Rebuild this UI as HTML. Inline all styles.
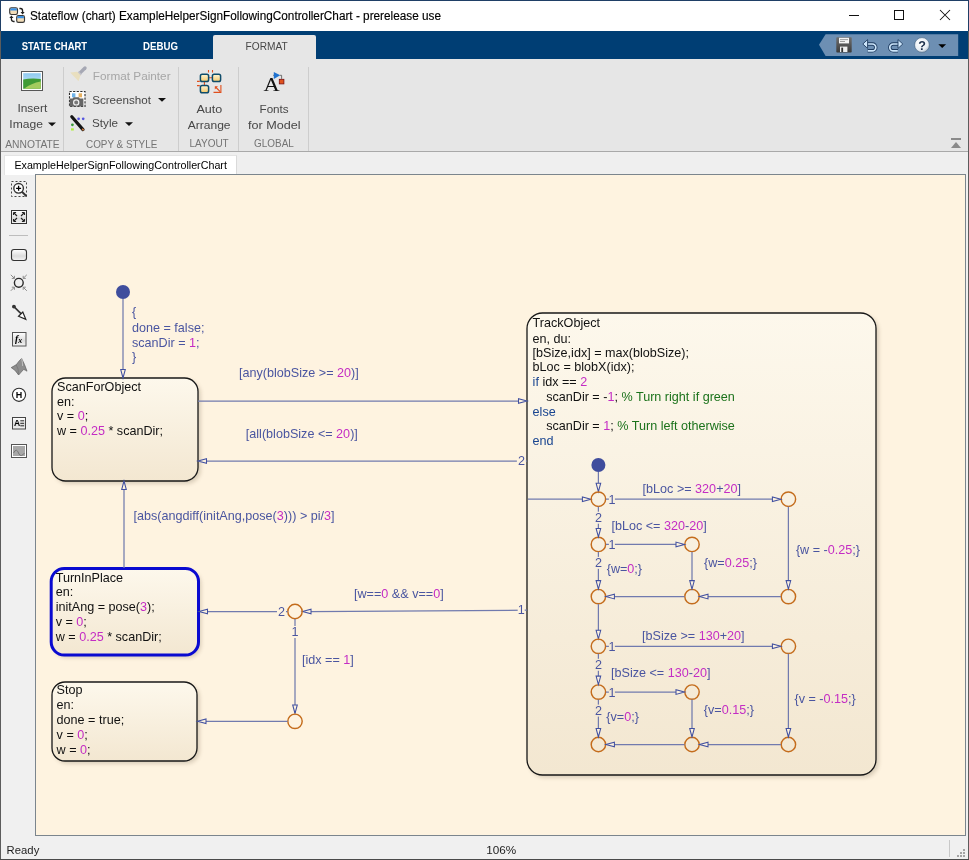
<!DOCTYPE html>
<html><head><meta charset="utf-8">
<style>
*{margin:0;padding:0;box-sizing:border-box}
html,body{width:969px;height:860px;overflow:hidden;background:#f0f0f0;font-family:"Liberation Sans",sans-serif}
.a{position:absolute;white-space:nowrap}
svg text{font-family:"Liberation Sans",sans-serif}
svg{will-change:transform}
</style></head><body>
<!-- backgrounds -->
<div class="a" style="left:0;top:0;width:969px;height:31px;background:#fff"></div>
<div class="a" style="left:0;top:0;width:969px;height:1px;background:#1f3f66"></div>
<div class="a" style="left:1px;top:31px;width:967px;height:28px;background:#003e74"></div>
<div class="a" style="left:1px;top:59px;width:967px;height:92px;background:#e6e6e6"></div>
<div class="a" style="left:1px;top:151px;width:967px;height:1px;background:#a9a9a9"></div>
<div class="a" style="left:1px;top:152px;width:967px;height:22px;background:#efefef"></div>
<div class="a" style="left:1px;top:174px;width:34px;height:662px;background:#f0f0f0"></div>
<div class="a" style="left:1px;top:836px;width:967px;height:23px;background:#f0f0f0"></div>
<div class="a" style="left:0;top:0;width:1px;height:860px;background:#5c5c5c"></div>
<div class="a" style="left:968px;top:0;width:1px;height:860px;background:#5c5c5c"></div>
<div class="a" style="left:0;top:859px;width:969px;height:1px;background:#4a4a4a"></div>
<div class="a" style="left:0;top:0;width:1px;height:31px;background:#1f3f66"></div>
<div class="a" style="left:968px;top:0;width:1px;height:31px;background:#1f3f66"></div>
<!-- doc tab -->
<div class="a" style="left:4px;top:155px;width:233px;height:20px;background:#fff;border-right:1px solid #dadada;border-top:1px solid #e4e4e4;border-left:1px solid #e4e4e4"></div>
<!-- canvas -->
<div class="a" style="left:35px;top:174px;width:931px;height:662px;background:#fef3e0;border:1px solid #7b858d"></div>

<svg class="a" style="left:0;top:0" width="969" height="860" viewBox="0 0 969 860">
<defs>
<linearGradient id="qsave" x1="0" y1="0" x2="0" y2="1"><stop offset="0" stop-color="#707070"/><stop offset="1" stop-color="#3a3a3a"/></linearGradient>
<linearGradient id="cream" x1="0" y1="0" x2="0" y2="1"><stop offset="0" stop-color="#fff6d8"/><stop offset="1" stop-color="#f4c868"/></linearGradient>
<linearGradient id="ibox" x1="0" y1="0" x2="0" y2="1"><stop offset="0" stop-color="#ffffff"/><stop offset="0.6" stop-color="#dcdcdc"/><stop offset="1" stop-color="#f4f4f4"/></linearGradient>
<radialGradient id="help" cx="0.4" cy="0.35" r="0.7"><stop offset="0" stop-color="#ffffff"/><stop offset="0.7" stop-color="#e8eef4"/><stop offset="1" stop-color="#aab8c8"/></radialGradient>
</defs>

<!-- title icon -->
<g>
<rect x="9.7" y="7.7" width="7.8" height="6.8" rx="1.7" fill="#f2ddb8" stroke="#3a3a3a" stroke-width="1.15"/>
<path d="M10.3 10.4 V9.4 a1.2 1.2 0 0 1 1.2-1.2 h4.2 a1.2 1.2 0 0 1 1.2 1.2 v1z" fill="#3a90e4"/>
<rect x="16.7" y="15.6" width="7.8" height="6.8" rx="1.7" fill="#f2ddb8" stroke="#3a3a3a" stroke-width="1.15"/>
<path d="M17.3 18.3 V17.3 a1.2 1.2 0 0 1 1.2-1.2 h4.2 a1.2 1.2 0 0 1 1.2 1.2 v1z" fill="#3a90e4"/>
<path d="M19.4 8.5 h1.2 q2 0 2 2.4 v1.4" fill="none" stroke="#222" stroke-width="1.3"/>
<path d="M20.5 12.1 h4.2 l-2.1 2.5z" fill="#222"/>
<path d="M14.6 21.5 h-1.2 q-2 0 -2 -2.4 v-1.4" fill="none" stroke="#222" stroke-width="1.3"/>
<path d="M9.3 17.9 h4.2 l-2.1 -2.5z" fill="#222"/>
</g>
<text x="30" y="20" font-size="12" fill="#000" stroke="#000" stroke-width="0.15" textLength="411" lengthAdjust="spacingAndGlyphs">Stateflow (chart) ExampleHelperSignFollowingControllerChart - prerelease use</text>
<!-- window controls -->
<rect x="849" y="15" width="10" height="1" fill="#111"/>
<rect x="894.5" y="10.5" width="9" height="9" fill="none" stroke="#111" stroke-width="1"/>
<path d="M940 10 L950 20 M950 10 L940 20" stroke="#111" stroke-width="1.05"/>

<!-- tabs -->
<text x="21.7" y="49.8" font-size="10.4" font-weight="bold" fill="#fff" textLength="65.4" lengthAdjust="spacingAndGlyphs">STATE CHART</text>
<text x="143" y="49.8" font-size="10.4" font-weight="bold" fill="#fff" textLength="34.9" lengthAdjust="spacingAndGlyphs">DEBUG</text>
<path d="M213 59 V37 a2 2 0 0 1 2-2 H314 a2 2 0 0 1 2 2 V59z" fill="#e6e6e6"/>
<text x="245.6" y="49.9" font-size="10.6" fill="#474747" textLength="42" lengthAdjust="spacingAndGlyphs">FORMAT</text>

<!-- QAT -->
<path d="M819 44.8 L825.6 34.2 H958.2 V55.9 H825.6 Z" fill="#6d8fb3"/>
<g>
<rect x="836.3" y="37.2" width="15.4" height="15.4" rx="0.8" fill="url(#qsave)"/>
<rect x="839" y="37.8" width="10" height="5.6" fill="#f4f4f4"/>
<rect x="840" y="39.3" width="8" height="0.8" fill="#888"/>
<rect x="840" y="41.2" width="5" height="0.8" fill="#888"/>
<rect x="840" y="46.6" width="7.4" height="5.4" fill="#eeeeee"/>
<rect x="841.3" y="47.6" width="1.8" height="4.4" fill="#333"/>
</g>
<g fill="none" stroke-linecap="butt">
<path d="M866.2 44 H872.4 a3.4 3.4 0 0 1 0 6.8 H867.6" stroke="#1f3c60" stroke-width="3.4"/>
<path d="M866.2 44 H872.4 a3.4 3.4 0 0 1 0 6.8 H867.8" stroke="#cde6fb" stroke-width="1.7"/>
<path d="M899.4 44 H893.2 a3.4 3.4 0 0 0 0 6.8 H898" stroke="#1f3c60" stroke-width="3.4"/>
<path d="M899.4 44 H893.2 a3.4 3.4 0 0 0 0 6.8 H897.8" stroke="#cde6fb" stroke-width="1.7"/>
</g>
<path d="M862.8 44 L867.6 39.6 V48.4 Z" fill="#cde6fb" stroke="#1f3c60" stroke-width="0.9" stroke-linejoin="round"/>
<path d="M902.8 44 L898 39.6 V48.4 Z" fill="#cde6fb" stroke="#1f3c60" stroke-width="0.9" stroke-linejoin="round"/>
<circle cx="922" cy="45" r="7.4" fill="url(#help)" stroke="#3a5a7a" stroke-width="0.6"/>
<text x="922" y="49.6" font-size="12.5" font-weight="bold" text-anchor="middle" fill="#1a2e4a">?</text>
<path d="M938.3 44.2 h7.8 l-3.9 3.8z" fill="#000"/>

<!-- Ribbon: ANNOTATE -->
<rect x="21.5" y="71.5" width="21" height="19" fill="#fff" stroke="#575757" stroke-width="1"/>
<linearGradient id="sky" x1="0" y1="0" x2="0" y2="1"><stop offset="0" stop-color="#8fcaf0"/><stop offset="1" stop-color="#d4eefb"/></linearGradient><rect x="23.2" y="73.2" width="17.6" height="15.6" fill="url(#sky)"/>
<path d="M23.2 79.5 q8 -1.5 17.6 -0.5 v9.8 h-17.6z" fill="#3f9b35"/>
<path d="M24 88.8 q7 -5.5 16.8 -7.2 v7.2z" fill="#a3cc5e"/>
<text x="17.4" y="111.8" font-size="11.2" fill="#474747" textLength="29.9" lengthAdjust="spacingAndGlyphs">Insert</text>
<text x="9.3" y="127.9" font-size="11.2" fill="#474747" textLength="33.6" lengthAdjust="spacingAndGlyphs">Image</text>
<path d="M48 122.5 h8 l-4 3.8z" fill="#111"/>
<text x="5.2" y="147.5" font-size="10.3" fill="#747474" textLength="54.5" lengthAdjust="spacingAndGlyphs">ANNOTATE</text>
<rect x="63" y="67" width="1" height="84" fill="#cdcdcd"/>

<!-- COPY & STYLE -->
<path d="M85 68 L79.6 73.4" stroke="#a6a8b4" stroke-width="3.4" stroke-linecap="round"/><path d="M80.2 72.8 L78 75" stroke="#c4c4cc" stroke-width="4.2"/>
<path d="M70.2 72.5 L77.2 71.8 L80.6 75.2 L78.5 81.2 Z" fill="#e9dfbf"/>
<text x="92.8" y="80" font-size="11.2" fill="#a6a6a6" textLength="77.8" lengthAdjust="spacingAndGlyphs">Format Painter</text>
<rect x="69.5" y="91.5" width="15.5" height="15" fill="#fff" stroke="#2a2a2a" stroke-width="1.1" stroke-dasharray="2.2,1.4"/>
<rect x="72" y="93.3" width="3.4" height="4" fill="#6fb4ea"/>
<rect x="78.6" y="93.3" width="3.4" height="4" fill="#e6b060"/>
<path d="M69.6 98.4 h3 l1 -1.2 h5.2 l1 1.2 h3.6 v8 h-13.8z" fill="#666"/>
<circle cx="76.2" cy="102.4" r="2.6" fill="#777" stroke="#eeeeee" stroke-width="1.2"/>
<text x="92.2" y="103.8" font-size="11.2" fill="#474747" textLength="58.8" lengthAdjust="spacingAndGlyphs">Screenshot</text>
<path d="M158 98 h8 l-4 3.8z" fill="#111"/>
<path d="M71.8 116.8 L83 129.6" stroke="#151515" stroke-width="3.2" stroke-linecap="round"/>
<path d="M82.2 128.8 L83.6 130.4" stroke="#d07a3a" stroke-width="1.6"/>
<circle cx="78.6" cy="118.8" r="1.35" fill="#5555e0"/>
<circle cx="83.2" cy="118.8" r="1.35" fill="#5555e0"/>
<circle cx="72.4" cy="124.8" r="1.4" fill="#3a9a3a"/>
<rect x="71" y="128.3" width="2.8" height="2.2" fill="#b0f040"/>
<text x="92" y="127.3" font-size="11.2" fill="#474747" textLength="26" lengthAdjust="spacingAndGlyphs">Style</text>
<path d="M125 122.2 h8 l-4 3.8z" fill="#111"/>
<text x="86" y="147.8" font-size="10.3" fill="#747474" textLength="71.3" lengthAdjust="spacingAndGlyphs">COPY &amp; STYLE</text>
<rect x="178" y="67" width="1" height="84" fill="#cdcdcd"/>

<!-- LAYOUT -->
<g stroke="#e0501e" stroke-width="1.1" fill="none">
<path d="M208.5 70 v2.6 M212.5 70 v2.6 M197 81.4 h2.8 M197 85.6 h2.8 M208.8 77.8 h3.2 M204.4 82 v3"/>
<path d="M213.5 92.4 h7.4 v-7.4"/>
<path d="M220.2 91.7 L215.5 87"/>
</g>
<path d="M214.8 86.3 h3.2 l-3.2 3.2z" fill="#e0501e"/>
<rect x="200.4" y="74.2" width="8.2" height="7.4" rx="1.8" fill="url(#cream)" stroke="#0f4c6a" stroke-width="1.5"/>
<rect x="212.4" y="74.2" width="8.2" height="7.4" rx="1.8" fill="url(#cream)" stroke="#0f4c6a" stroke-width="1.5"/>
<rect x="200.4" y="85.4" width="8.2" height="7.4" rx="1.8" fill="url(#cream)" stroke="#0f4c6a" stroke-width="1.5"/>
<text x="196.4" y="113.2" font-size="11.2" fill="#474747" textLength="25.8" lengthAdjust="spacingAndGlyphs">Auto</text>
<text x="187.7" y="129" font-size="11.2" fill="#474747" textLength="42.9" lengthAdjust="spacingAndGlyphs">Arrange</text>
<text x="189.5" y="147.3" font-size="10.3" fill="#747474" textLength="39.2" lengthAdjust="spacingAndGlyphs">LAYOUT</text>
<rect x="238" y="67" width="1" height="84" fill="#cdcdcd"/>

<!-- GLOBAL -->
<text x="263.4" y="90.8" style="font-family:'Liberation Serif'" font-size="19.5" fill="#111" textLength="16.2" lengthAdjust="spacingAndGlyphs">A</text>
<path d="M273.2 75.3 h1" stroke="#444" stroke-width="0.8"/>
<path d="M273.8 71.9 L280.2 75.3 L273.8 78.9z" fill="#1f72d0"/>
<path d="M280 75.3 h1.6 v3.6" fill="none" stroke="#555" stroke-width="0.8"/>
<rect x="279.3" y="79.3" width="4.6" height="4.6" fill="#e0521e" stroke="#7a1010" stroke-width="0.8"/>
<text x="259.5" y="113.2" font-size="11.2" fill="#474747" textLength="29.2" lengthAdjust="spacingAndGlyphs">Fonts</text>
<text x="248" y="129" font-size="11.2" fill="#474747" textLength="52.6" lengthAdjust="spacingAndGlyphs">for Model</text>
<text x="254" y="147.3" font-size="10.3" fill="#747474" textLength="39.8" lengthAdjust="spacingAndGlyphs">GLOBAL</text>
<rect x="308" y="67" width="1" height="84" fill="#cdcdcd"/>

<!-- collapse ribbon -->
<rect x="951" y="138" width="10" height="2" fill="#8a8a8a"/>
<path d="M951 148 h10 l-5 -6z" fill="#8a8a8a"/>

<!-- doc tab text -->
<text x="14.4" y="168.6" font-size="10.8" fill="#000" textLength="212.5" lengthAdjust="spacingAndGlyphs">ExampleHelperSignFollowingControllerChart</text>

<!-- palette -->
<g>
<rect x="11.5" y="181.5" width="15" height="15" fill="none" stroke="#444" stroke-width="1" stroke-dasharray="2,2"/>
<path d="M21.6 191.4 L26 195.8" stroke="#333" stroke-width="2" stroke-linecap="round"/>
<circle cx="18.6" cy="188.3" r="4.8" fill="#fff" stroke="#333" stroke-width="1.4"/>
<path d="M16.1 188.3 h5 M18.6 185.8 v5" stroke="#000" stroke-width="1.3"/>
</g>
<g>
<rect x="11.5" y="210.5" width="15" height="13" fill="url(#ibox)" stroke="#333" stroke-width="1"/>
<path d="M13.5 212.5 l3.5 3.5 M13.5 212.5 h2.6 M13.5 212.5 v2.6 M24.5 212.5 l-3.5 3.5 M24.5 212.5 h-2.6 M24.5 212.5 v2.6 M13.5 221.5 l3.5 -3.5 M13.5 221.5 h2.6 M13.5 221.5 v-2.6 M24.5 221.5 l-3.5 -3.5 M24.5 221.5 h-2.6 M24.5 221.5 v-2.6" stroke="#222" stroke-width="1.1"/>
</g>
<rect x="9" y="235" width="19" height="1" fill="#bdbdbd"/>
<rect x="11.5" y="249.5" width="15" height="11" rx="2.5" fill="url(#ibox)" stroke="#333" stroke-width="1.1"/>
<g>
<circle cx="18.8" cy="282.8" r="4.4" fill="none" stroke="#2a2a2a" stroke-width="1.4"/>
<path d="M10.8 274.8 l3.6 3.6 M11.8 278.4 h2.6 v-2.6 M26.8 274.8 l-3.6 3.6 M25.8 278.4 h-2.6 v-2.6 M10.8 290.8 l3.6 -3.6 M11.8 287.2 h2.6 v2.6 M26.8 290.8 l-3.6 -3.6 M25.8 287.2 h-2.6 v2.6" fill="none" stroke="#8a8a8a" stroke-width="1"/>
</g>
<g>
<circle cx="13.9" cy="306.6" r="1.9" fill="#333"/>
<path d="M13.9 306.6 L21 313.6" stroke="#333" stroke-width="1.6"/>
<path d="M18.5 316.2 L25.8 319.3 L22.8 312.1 Z" fill="#fff" stroke="#222" stroke-width="1.2"/>
</g>
<g>
<rect x="12.5" y="332.5" width="13.5" height="13.5" fill="url(#ibox)" stroke="#555" stroke-width="1"/>
<text x="18.6" y="342.2" style="font-family:'Liberation Serif'" font-size="10" font-style="italic" font-weight="bold" fill="#000" text-anchor="middle">f<tspan font-size="8" dy="0.6">x</tspan></text>
</g>
<path d="M11.2 367.6 L16.2 364.8 Q19.4 360.4 21.6 358.4 Q24.6 364 27 371.2 Q24.8 369.4 23.4 369.6 Q20.8 372.6 18.6 375 Q15.6 369.8 11.2 367.6Z" fill="#8e8e8e" stroke="#5e5e5e" stroke-width="0.7"/>
<path d="M16.2 364.8 Q18.6 368 18.6 375" fill="none" stroke="#6e6e6e" stroke-width="0.6"/>
<path d="M21.6 358.4 Q22.6 362 22.6 366" fill="none" stroke="#c4c4c4" stroke-width="0.9"/>
<circle cx="19" cy="394.8" r="6.6" fill="#fff" stroke="#2e2e2e" stroke-width="1.1"/>
<text x="19" y="398.3" font-size="9" font-weight="bold" text-anchor="middle" fill="#000">H</text>
<g>
<rect x="12.5" y="417.5" width="13" height="11.5" fill="url(#ibox)" stroke="#444" stroke-width="1"/>
<text x="14" y="426" font-size="8.5" font-weight="bold" fill="#000">A</text>
<path d="M20.3 420.8 h3.8 M20.3 423.3 h3.8 M20.3 425.8 h3.8" stroke="#111" stroke-width="0.9"/>
</g>
<g>
<rect x="11.5" y="444.5" width="15" height="13" fill="#fff" stroke="#555" stroke-width="1"/>
<rect x="13" y="446" width="12" height="10" fill="#a8a8a8"/>
<path d="M13.5 453 q3 -6 5.5 1 q2 3.5 5.5 -1" fill="none" stroke="#777" stroke-width="1"/>
</g>

<!-- status bar -->
<text x="6.6" y="853.8" font-size="11.2" fill="#1e1e1e" textLength="32.7" lengthAdjust="spacingAndGlyphs">Ready</text>
<text x="486.2" y="853.6" font-size="11.2" fill="#1e1e1e" textLength="30" lengthAdjust="spacingAndGlyphs">106%</text>
<rect x="949" y="840" width="1" height="17" fill="#c8c8c8"/>
<g fill="#a4a4a4">
<rect x="963" y="849" width="2" height="2"/>
<rect x="960" y="852" width="2" height="2"/><rect x="963" y="852" width="2" height="2"/>
<rect x="957" y="855" width="2" height="2"/><rect x="960" y="855" width="2" height="2"/><rect x="963" y="855" width="2" height="2"/>
</g>
</svg>

<svg class="a" style="left:0;top:0" width="969" height="860" viewBox="0 0 969 860" font-family="Liberation Sans, sans-serif" font-size="12.6"><defs>
<linearGradient id="g1" x1="0" y1="0" x2="0" y2="1"><stop offset="0" stop-color="#fdf8ec"/><stop offset="1" stop-color="#f3e7d1"/></linearGradient>
<filter id="blur" x="-10%" y="-10%" width="120%" height="120%"><feGaussianBlur stdDeviation="2"/></filter>
</defs>
<rect x="54.5" y="380.5" width="146" height="103" rx="13.5" fill="#3a2a10" opacity="0.2" filter="url(#blur)"/>
<rect x="52" y="378" width="146" height="103" rx="13.5" fill="url(#g1)" stroke="#181818" stroke-width="1.3"/>
<rect x="53.7" y="570.9" width="147.3" height="86.60000000000002" rx="13" fill="#3a2a10" opacity="0.2" filter="url(#blur)"/>
<rect x="51.2" y="568.4" width="147.3" height="86.60000000000002" rx="13" fill="url(#g1)" stroke="#0a0ad0" stroke-width="3"/>
<rect x="54.5" y="684.5" width="145" height="79" rx="13" fill="#3a2a10" opacity="0.2" filter="url(#blur)"/>
<rect x="52" y="682" width="145" height="79" rx="13" fill="url(#g1)" stroke="#181818" stroke-width="1.3"/>
<rect x="529.5" y="315.5" width="349" height="462" rx="15.5" fill="#3a2a10" opacity="0.2" filter="url(#blur)"/>
<rect x="527" y="313" width="349" height="462" rx="15.5" fill="url(#g1)" stroke="#181818" stroke-width="1.3"/>
<text x="57" y="390.6" fill="#111111">ScanForObject</text>
<text x="57" y="405.5" fill="#111111">en:</text>
<text x="57" y="420.4" fill="#111111">v = <tspan fill="#c42cc4">0</tspan>;</text>
<text x="57" y="435.2" fill="#111111">w = <tspan fill="#c42cc4">0.25</tspan> * scanDir;</text>
<text x="55.7" y="581.5" fill="#111111">TurnInPlace</text>
<text x="55.7" y="596" fill="#111111">en:</text>
<text x="55.7" y="611" fill="#111111">initAng = pose(<tspan fill="#c42cc4">3</tspan>);</text>
<text x="55.7" y="625.8" fill="#111111">v = <tspan fill="#c42cc4">0</tspan>;</text>
<text x="55.7" y="641" fill="#111111">w = <tspan fill="#c42cc4">0.25</tspan> * scanDir;</text>
<text x="56.6" y="694" fill="#111111">Stop</text>
<text x="56.6" y="708.8" fill="#111111">en:</text>
<text x="56.6" y="723.7" fill="#111111">done = true;</text>
<text x="56.6" y="739" fill="#111111">v = <tspan fill="#c42cc4">0</tspan>;</text>
<text x="56.6" y="754.3" fill="#111111">w = <tspan fill="#c42cc4">0</tspan>;</text>
<text x="532.6" y="326.7" fill="#111111">TrackObject</text>
<text x="532.6" y="342.5" fill="#111111">en, du:</text>
<text x="532.6" y="357.3" fill="#111111">[bSize,idx] = max(blobSize);</text>
<text x="532.6" y="371" fill="#111111">bLoc = blobX(idx);</text>
<text x="532.6" y="385.7" fill="#111111"><tspan fill="#184490">if</tspan> idx == <tspan fill="#c42cc4">2</tspan></text>
<text x="546.2" y="401.3" fill="#111111">scanDir = -<tspan fill="#c42cc4">1</tspan>; <tspan fill="#1b721b">% Turn right if green</tspan></text>
<text x="532.6" y="416.3" fill="#184490">else</text>
<text x="546.2" y="430" fill="#111111">scanDir = <tspan fill="#c42cc4">1</tspan>; <tspan fill="#1b721b">% Turn left otherwise</tspan></text>
<text x="532.6" y="445.3" fill="#184490">end</text>
<circle cx="123" cy="292" r="7" fill="#3f4d9d"/>
<line x1="123" y1="299" x2="123" y2="377" stroke="#717aae" stroke-width="1.25"/>
<polygon points="123.0,378.0 120.7,369.5 125.3,369.5" fill="#fdf2df" stroke="#4150a0" stroke-width="1.05" stroke-linejoin="miter"/>
<text x="132" y="316" fill="#4a55a0">{</text>
<text x="132" y="332" fill="#4a55a0">done = false;</text>
<text x="132" y="347" fill="#4a55a0">scanDir = <tspan fill="#c42cc4">1</tspan>;</text>
<text x="132" y="361" fill="#4a55a0">}</text>
<line x1="198" y1="401" x2="519" y2="401" stroke="#717aae" stroke-width="1.25"/>
<polygon points="527.0,401.0 518.5,398.7 518.5,403.3" fill="#fdf2df" stroke="#4150a0" stroke-width="1.05" stroke-linejoin="miter"/>
<text x="239" y="377.2" fill="#4a55a0">[any(blobSize &gt;= <tspan fill="#c42cc4">20</tspan>)]</text>
<line x1="206" y1="461" x2="527" y2="461" stroke="#717aae" stroke-width="1.25"/>
<polygon points="198.0,461.0 206.5,458.7 206.5,463.3" fill="#fdf2df" stroke="#4150a0" stroke-width="1.05" stroke-linejoin="miter"/>
<rect x="516.9" y="455.2" width="9" height="13" fill="#fef3e0"/>
<text x="521.4" y="465.2" fill="#4a55a0" text-anchor="middle">2</text>
<text x="245.8" y="437.5" fill="#4a55a0">[all(blobSize &lt;= <tspan fill="#c42cc4">20</tspan>)]</text>
<line x1="124" y1="489" x2="124" y2="568" stroke="#717aae" stroke-width="1.25"/>
<polygon points="124.0,481.0 121.7,489.5 126.3,489.5" fill="#fdf2df" stroke="#4150a0" stroke-width="1.05" stroke-linejoin="miter"/>
<text x="133.5" y="520.4" fill="#4a55a0">[abs(angdiff(initAng,pose(<tspan fill="#c42cc4">3</tspan>))) &gt; pi/<tspan fill="#c42cc4">3</tspan>]</text>
<line x1="527" y1="610.2" x2="311" y2="611.5" stroke="#717aae" stroke-width="1.25"/>
<polygon points="302.5,611.5 311.0,609.2 311.0,613.8" fill="#fdf2df" stroke="#4150a0" stroke-width="1.05" stroke-linejoin="miter"/>
<rect x="517.7" y="604" width="7" height="12" fill="#fef3e0"/>
<text x="521.2" y="614" fill="#4a55a0" text-anchor="middle">1</text>
<text x="354" y="598.2" fill="#4a55a0">[w==<tspan fill="#c42cc4">0</tspan> &amp;&amp; v==<tspan fill="#c42cc4">0</tspan>]</text>
<circle cx="295" cy="611.5" r="7.2" fill="none" stroke="#c46c1c" stroke-width="1.45"/>
<line x1="207" y1="611.5" x2="287.5" y2="611.5" stroke="#717aae" stroke-width="1.25"/>
<polygon points="199.0,611.5 207.5,609.2 207.5,613.8" fill="#fdf2df" stroke="#4150a0" stroke-width="1.05" stroke-linejoin="miter"/>
<rect x="277.0" y="606" width="9" height="12" fill="#fef3e0"/>
<text x="281.5" y="616" fill="#4a55a0" text-anchor="middle">2</text>
<line x1="295" y1="619" x2="295" y2="713" stroke="#717aae" stroke-width="1.25"/>
<polygon points="295.0,713.5 292.7,705.0 297.3,705.0" fill="#fdf2df" stroke="#4150a0" stroke-width="1.05" stroke-linejoin="miter"/>
<rect x="291.5" y="626" width="7" height="12" fill="#fef3e0"/>
<text x="295" y="636" fill="#4a55a0" text-anchor="middle">1</text>
<text x="302" y="664.2" fill="#4a55a0">[idx == <tspan fill="#c42cc4">1</tspan>]</text>
<circle cx="295" cy="721.3" r="7.2" fill="none" stroke="#c46c1c" stroke-width="1.45"/>
<line x1="206" y1="721.3" x2="287.5" y2="721.3" stroke="#717aae" stroke-width="1.25"/>
<polygon points="197.5,721.3 206.0,719.0 206.0,723.6" fill="#fdf2df" stroke="#4150a0" stroke-width="1.05" stroke-linejoin="miter"/>
<circle cx="598.4" cy="465" r="7" fill="#3f4d9d"/>
<line x1="598.4" y1="472" x2="598.4" y2="483" stroke="#717aae" stroke-width="1.25"/>
<polygon points="598.4,491.7 596.1,483.2 600.7,483.2" fill="#fdf2df" stroke="#4150a0" stroke-width="1.05" stroke-linejoin="miter"/>
<line x1="528" y1="499.2" x2="582" y2="499.2" stroke="#717aae" stroke-width="1.25"/>
<polygon points="590.9,499.2 582.4,496.9 582.4,501.5" fill="#fdf2df" stroke="#4150a0" stroke-width="1.05" stroke-linejoin="miter"/>
<circle cx="598.4" cy="499.2" r="7.2" fill="none" stroke="#c46c1c" stroke-width="1.45"/>
<circle cx="788.4" cy="499.2" r="7.2" fill="none" stroke="#c46c1c" stroke-width="1.45"/>
<circle cx="598.4" cy="544.4" r="7.2" fill="none" stroke="#c46c1c" stroke-width="1.45"/>
<circle cx="692" cy="544.4" r="7.2" fill="none" stroke="#c46c1c" stroke-width="1.45"/>
<circle cx="598.4" cy="596.6" r="7.2" fill="none" stroke="#c46c1c" stroke-width="1.45"/>
<circle cx="692" cy="596.6" r="7.2" fill="none" stroke="#c46c1c" stroke-width="1.45"/>
<circle cx="788.4" cy="596.6" r="7.2" fill="none" stroke="#c46c1c" stroke-width="1.45"/>
<line x1="605.9" y1="499.2" x2="772.9" y2="499.2" stroke="#717aae" stroke-width="1.25"/>
<polygon points="780.9,499.2 772.4,496.9 772.4,501.5" fill="#fdf2df" stroke="#4150a0" stroke-width="1.05" stroke-linejoin="miter"/>
<rect x="608.9" y="493.7" width="6" height="11" fill="#f8f0e0"/>
<text x="611.9" y="503.7" fill="#4a55a0" text-anchor="middle">1</text>
<text x="642.6" y="493.1" fill="#4a55a0">[bLoc &gt;= <tspan fill="#c42cc4">320</tspan>+<tspan fill="#c42cc4">20</tspan>]</text>
<line x1="598.4" y1="506.7" x2="598.4" y2="528.9" stroke="#717aae" stroke-width="1.25"/>
<polygon points="598.4,536.9 596.1,528.4 600.7,528.4" fill="#fdf2df" stroke="#4150a0" stroke-width="1.05" stroke-linejoin="miter"/>
<rect x="594.4" y="511.70000000000005" width="8" height="12" fill="#f7efde"/>
<text x="598.4" y="521.7" fill="#4a55a0" text-anchor="middle">2</text>
<line x1="605.9" y1="544.4" x2="676.5" y2="544.4" stroke="#717aae" stroke-width="1.25"/>
<polygon points="684.5,544.4 676.0,542.1 676.0,546.7" fill="#fdf2df" stroke="#4150a0" stroke-width="1.05" stroke-linejoin="miter"/>
<rect x="608.9" y="538.9" width="6" height="11" fill="#f6eedd"/>
<text x="611.9" y="548.9" fill="#4a55a0" text-anchor="middle">1</text>
<text x="611.4" y="530.3" fill="#4a55a0">[bLoc &lt;= <tspan fill="#c42cc4">320</tspan>-<tspan fill="#c42cc4">20</tspan>]</text>
<line x1="598.4" y1="551.9" x2="598.4" y2="581.1" stroke="#717aae" stroke-width="1.25"/>
<polygon points="598.4,589.1 596.1,580.6 600.7,580.6" fill="#fdf2df" stroke="#4150a0" stroke-width="1.05" stroke-linejoin="miter"/>
<rect x="594.4" y="556.9" width="8" height="12" fill="#f6eddc"/>
<text x="598.4" y="566.9" fill="#4a55a0" text-anchor="middle">2</text>
<text x="606.7" y="573.2" fill="#4a55a0">{w=<tspan fill="#c42cc4">0</tspan>;}</text>
<line x1="692" y1="551.9" x2="692" y2="581.1" stroke="#717aae" stroke-width="1.25"/>
<polygon points="692.0,589.1 689.7,580.6 694.3,580.6" fill="#fdf2df" stroke="#4150a0" stroke-width="1.05" stroke-linejoin="miter"/>
<text x="704" y="566.7" fill="#4a55a0">{w=<tspan fill="#c42cc4">0.25</tspan>;}</text>
<line x1="788.4" y1="506.7" x2="788.4" y2="581.1" stroke="#717aae" stroke-width="1.25"/>
<polygon points="788.4,589.1 786.1,580.6 790.7,580.6" fill="#fdf2df" stroke="#4150a0" stroke-width="1.05" stroke-linejoin="miter"/>
<text x="795.9" y="554" fill="#4a55a0">{w = -<tspan fill="#c42cc4">0.25</tspan>;}</text>
<line x1="707.5" y1="596.6" x2="780.9" y2="596.6" stroke="#717aae" stroke-width="1.25"/>
<polygon points="699.5,596.6 708.0,594.3 708.0,598.9" fill="#fdf2df" stroke="#4150a0" stroke-width="1.05" stroke-linejoin="miter"/>
<line x1="613.9" y1="596.6" x2="684.5" y2="596.6" stroke="#717aae" stroke-width="1.25"/>
<polygon points="605.9,596.6 614.4,594.3 614.4,598.9" fill="#fdf2df" stroke="#4150a0" stroke-width="1.05" stroke-linejoin="miter"/>
<line x1="598.4" y1="604.1" x2="598.4" y2="630.8" stroke="#717aae" stroke-width="1.25"/>
<polygon points="598.4,638.8 596.1,630.3 600.7,630.3" fill="#fdf2df" stroke="#4150a0" stroke-width="1.05" stroke-linejoin="miter"/>
<circle cx="598.4" cy="646.3" r="7.2" fill="none" stroke="#c46c1c" stroke-width="1.45"/>
<circle cx="788.4" cy="646.3" r="7.2" fill="none" stroke="#c46c1c" stroke-width="1.45"/>
<circle cx="598.4" cy="692.1" r="7.2" fill="none" stroke="#c46c1c" stroke-width="1.45"/>
<circle cx="692" cy="692.1" r="7.2" fill="none" stroke="#c46c1c" stroke-width="1.45"/>
<circle cx="598.4" cy="744.5" r="7.2" fill="none" stroke="#c46c1c" stroke-width="1.45"/>
<circle cx="692" cy="744.5" r="7.2" fill="none" stroke="#c46c1c" stroke-width="1.45"/>
<circle cx="788.4" cy="744.5" r="7.2" fill="none" stroke="#c46c1c" stroke-width="1.45"/>
<line x1="605.9" y1="646.3" x2="772.9" y2="646.3" stroke="#717aae" stroke-width="1.25"/>
<polygon points="780.9,646.3 772.4,644.0 772.4,648.6" fill="#fdf2df" stroke="#4150a0" stroke-width="1.05" stroke-linejoin="miter"/>
<rect x="608.9" y="640.8" width="6" height="11" fill="#f4ead6"/>
<text x="611.9" y="650.8" fill="#4a55a0" text-anchor="middle">1</text>
<text x="642" y="640.3" fill="#4a55a0">[bSize &gt;= <tspan fill="#c42cc4">130</tspan>+<tspan fill="#c42cc4">20</tspan>]</text>
<line x1="598.4" y1="653.8" x2="598.4" y2="676.6" stroke="#717aae" stroke-width="1.25"/>
<polygon points="598.4,684.6 596.1,676.1 600.7,676.1" fill="#fdf2df" stroke="#4150a0" stroke-width="1.05" stroke-linejoin="miter"/>
<rect x="594.4" y="658.8" width="8" height="12" fill="#f3e9d5"/>
<text x="598.4" y="668.8" fill="#4a55a0" text-anchor="middle">2</text>
<line x1="605.9" y1="692.1" x2="676.5" y2="692.1" stroke="#717aae" stroke-width="1.25"/>
<polygon points="684.5,692.1 676.0,689.8 676.0,694.4" fill="#fdf2df" stroke="#4150a0" stroke-width="1.05" stroke-linejoin="miter"/>
<rect x="608.9" y="686.6" width="6" height="11" fill="#f3e8d3"/>
<text x="611.9" y="696.6" fill="#4a55a0" text-anchor="middle">1</text>
<text x="611" y="676.7" fill="#4a55a0">[bSize &lt;= <tspan fill="#c42cc4">130</tspan>-<tspan fill="#c42cc4">20</tspan>]</text>
<line x1="598.4" y1="699.6" x2="598.4" y2="729.0" stroke="#717aae" stroke-width="1.25"/>
<polygon points="598.4,737.0 596.1,728.5 600.7,728.5" fill="#fdf2df" stroke="#4150a0" stroke-width="1.05" stroke-linejoin="miter"/>
<rect x="594.4" y="704.6" width="8" height="12" fill="#f2e7d2"/>
<text x="598.4" y="714.6" fill="#4a55a0" text-anchor="middle">2</text>
<text x="606.3" y="720.6" fill="#4a55a0">{v=<tspan fill="#c42cc4">0</tspan>;}</text>
<line x1="692" y1="699.6" x2="692" y2="729.0" stroke="#717aae" stroke-width="1.25"/>
<polygon points="692.0,737.0 689.7,728.5 694.3,728.5" fill="#fdf2df" stroke="#4150a0" stroke-width="1.05" stroke-linejoin="miter"/>
<text x="703.8" y="713.8" fill="#4a55a0">{v=<tspan fill="#c42cc4">0.15</tspan>;}</text>
<line x1="788.4" y1="653.8" x2="788.4" y2="729.0" stroke="#717aae" stroke-width="1.25"/>
<polygon points="788.4,737.0 786.1,728.5 790.7,728.5" fill="#fdf2df" stroke="#4150a0" stroke-width="1.05" stroke-linejoin="miter"/>
<text x="794.5" y="703" fill="#4a55a0">{v = -<tspan fill="#c42cc4">0.15</tspan>;}</text>
<line x1="707.5" y1="744.5" x2="780.9" y2="744.5" stroke="#717aae" stroke-width="1.25"/>
<polygon points="699.5,744.5 708.0,742.2 708.0,746.8" fill="#fdf2df" stroke="#4150a0" stroke-width="1.05" stroke-linejoin="miter"/>
<line x1="613.9" y1="744.5" x2="684.5" y2="744.5" stroke="#717aae" stroke-width="1.25"/>
<polygon points="605.9,744.5 614.4,742.2 614.4,746.8" fill="#fdf2df" stroke="#4150a0" stroke-width="1.05" stroke-linejoin="miter"/></svg>
</body></html>
